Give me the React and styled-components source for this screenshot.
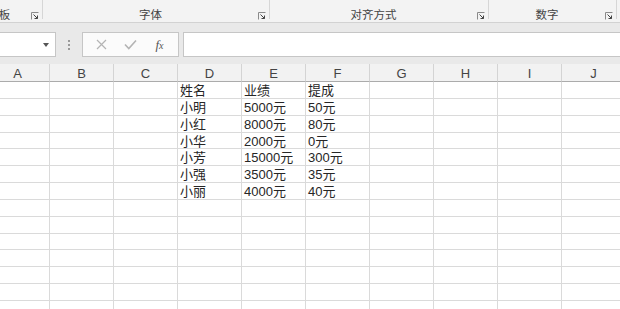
import React from 'react';
import styled, { createGlobalStyle } from 'styled-components';

const GlobalStyle = createGlobalStyle`
  html, body {
    margin: 0;
    padding: 0;
    background: #ffffff;
    overflow: hidden;
  }
`;

const FONT = `"Liberation Sans", "Noto Sans CJK SC", Arial, sans-serif`;

const GROUPS = [
  { label: '剪贴板', width: 88 },
  { label: '字体', width: 227 },
  { label: '对齐方式', width: 219 },
  { label: '数字', width: 128 },
];

const COLUMNS = ['A', 'B', 'C', 'D', 'E', 'F', 'G', 'H', 'I', 'J'];

const DATA = [
  ['姓名', '业绩', '提成'],
  ['小明', '5000元', '50元'],
  ['小红', '8000元', '80元'],
  ['小华', '2000元', '0元'],
  ['小芳', '15000元', '300元'],
  ['小强', '3500元', '35元'],
  ['小丽', '4000元', '40元'],
];

const ROW_COUNT = 14;

const LauncherIcon = () => (
  <svg width="8" height="8" viewBox="0 0 8 8">
    <path d="M0.5 7.5 V0.5 H7.5" fill="none" stroke="#8a8a8a" strokeWidth="1" />
    <path d="M2.5 2.5 L6.5 6.5 M3.5 6.5 H6.5 V3.5" fill="none" stroke="#444" strokeWidth="1" />
  </svg>
);

const App = () => {
  const rows = Array.from({ length: ROW_COUNT }, (_, r) => r);

  return (
    <Screen>
      <GlobalStyle />
      <Ribbon>
        {GROUPS.map((g) => (
          <Group key={g.label} $width={g.width}>
            <GroupLabel>{g.label}</GroupLabel>
            <Launcher>
              <LauncherIcon />
            </Launcher>
          </Group>
        ))}
      </Ribbon>

      <FormulaBar>
        <NameBox>
          <DropArrow />
        </NameBox>
        <Grip>
          <span />
          <span />
          <span />
        </Grip>
        <ButtonBox>
          <BarButton>
            <svg width="11" height="11" viewBox="0 0 11 11">
              <path d="M1 1 L10 10 M10 1 L1 10" stroke="#b4b4b4" strokeWidth="1.2" />
            </svg>
          </BarButton>
          <BarButton>
            <svg width="13" height="11" viewBox="0 0 13 11">
              <path d="M1 5.5 L4.8 9.5 L12 1.5" fill="none" stroke="#b4b4b4" strokeWidth="1.6" />
            </svg>
          </BarButton>
          <BarButton>
            <Fx>
              f<small>x</small>
            </Fx>
          </BarButton>
        </ButtonBox>
        <FormulaInput />
      </FormulaBar>

      <Sheet>
        {COLUMNS.map((c) => (
          <HeaderCell key={c}>{c}</HeaderCell>
        ))}
        {rows.map((r) =>
          COLUMNS.map((c, ci) => {
            const value = ci >= 3 && ci <= 5 && DATA[r] ? DATA[r][ci - 3] : '';
            return <Cell key={`${r}-${c}`}>{value}</Cell>;
          })
        )}
      </Sheet>
    </Screen>
  );
};

const Screen = styled.div`
  width: 620px;
  height: 309px;
  overflow: hidden;
  background: #ffffff;
  font-family: ${FONT};
`;

const Ribbon = styled.div`
  display: flex;
  height: 22px;
  margin-left: -45px;
  background: #f3f3f3;
  border-bottom: 1px solid #d2d2d2;
`;

const Group = styled.div`
  flex: 0 0 ${(p) => p.$width}px;
  height: 19px;
  display: flex;
  align-items: center;
  padding-top: 11px;
  box-sizing: border-box;
  border-right: 1px solid #d6d6d6;
`;

const GroupLabel = styled.div`
  flex: 1;
  text-align: center;
  font-size: 11.5px;
  color: #444444;
  line-height: 14px;
  padding-left: 6px;
`;

const Launcher = styled.div`
  width: 8px;
  height: 8px;
  margin: 1px 3px 0 6px;
  display: flex;
`;

const FormulaBar = styled.div`
  display: flex;
  align-items: flex-start;
  height: 41px;
  padding-top: 9px;
  box-sizing: border-box;
  background: #e9e9e9;
`;

const NameBox = styled.div`
  width: 76px;
  height: 25px;
  margin-left: -20px;
  box-sizing: border-box;
  background: #ffffff;
  border: 1px solid #c6c6c6;
  display: flex;
  align-items: center;
  justify-content: flex-end;
  padding-right: 6px;
`;

const DropArrow = styled.div`
  width: 0;
  height: 0;
  border-left: 3.5px solid transparent;
  border-right: 3.5px solid transparent;
  border-top: 4px solid #555555;
`;

const Grip = styled.div`
  width: 26px;
  height: 25px;
  display: flex;
  flex-direction: column;
  align-items: center;
  justify-content: center;
  gap: 2px;

  span {
    width: 2px;
    height: 2px;
    background: #9a9a9a;
  }
`;

const ButtonBox = styled.div`
  width: 97px;
  height: 25px;
  box-sizing: border-box;
  background: #fbfbfb;
  border: 1px solid #c6c6c6;
  display: flex;
  align-items: center;
  justify-content: space-around;
  padding: 0 4px;
`;

const BarButton = styled.div`
  width: 24px;
  display: flex;
  align-items: center;
  justify-content: center;
`;

const Fx = styled.span`
  font-family: "Liberation Serif", "Times New Roman", serif;
  font-style: italic;
  font-size: 13px;
  color: #555555;

  small {
    font-size: 10px;
  }
`;

const FormulaInput = styled.div`
  flex: 1;
  height: 25px;
  margin-left: 4px;
  margin-right: -2px;
  box-sizing: border-box;
  background: #ffffff;
  border: 1px solid #c6c6c6;
`;

const Sheet = styled.div`
  display: grid;
  grid-template-columns: repeat(10, 64px);
  grid-auto-rows: 16.85px;
  grid-template-rows: 18px;
  margin-left: -14px;
`;

const HeaderCell = styled.div`
  box-sizing: border-box;
  height: 18px;
  background: #f2f2f2;
  border-bottom: 1px solid #ababab;
  border-right: 1px solid #d4d4d4;
  font-size: 13px;
  color: #444444;
  text-align: center;
  line-height: 19px;
`;

const Cell = styled.div`
  box-sizing: border-box;
  border-right: 1px solid #dadada;
  border-bottom: 1px solid #dadada;
  padding-left: 2px;
  font-size: 13px;
  color: #262626;
  line-height: 18px;
  white-space: nowrap;
  overflow: visible;
`;

export default App;
